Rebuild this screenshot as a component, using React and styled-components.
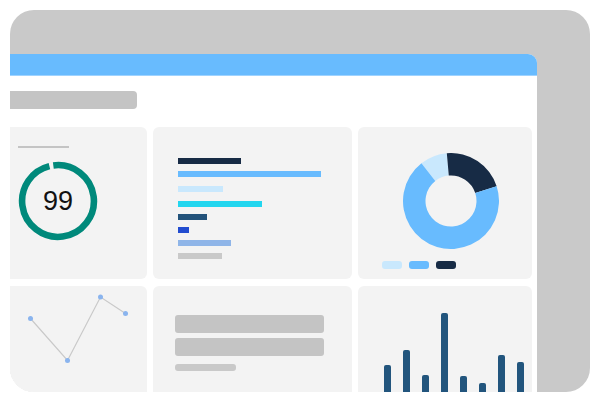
import React from "react";
import styled, { createGlobalStyle } from "styled-components";

const GlobalStyle = createGlobalStyle`
  html, body { margin: 0; padding: 0; background: #ffffff; }
  body { font-family: "Liberation Sans", Arial, sans-serif; }
  * { box-sizing: border-box; }
`;

const Stage = styled.div`
  width: 600px;
  height: 402px;
  padding: 10px;
`;

const Frame = styled.div`
  width: 580px;
  height: 382px;
  background: #c9c9c9;
  border-radius: 24px;
  overflow: hidden;
  display: flex;
  flex-direction: column;
  padding: 44px 53px 0 0;
`;

const Screen = styled.div`
  flex: 1;
  background: #ffffff;
  border-top-right-radius: 9px;
  overflow: hidden;
  display: flex;
  flex-direction: column;
`;

const TopBar = styled.div`
  flex-shrink: 0;
  height: 22px;
  background: #68bbfe;
  border-bottom: 1px solid #9fd3ff;
`;

const TitlePill = styled.div`
  flex-shrink: 0;
  margin: 15px 0 0 -10px;
  width: 137px;
  height: 18px;
  border-radius: 4px;
  background: #c4c4c4;
`;

const Grid = styled.div`
  flex-shrink: 0;
  margin: 18px 5px 0 -10px;
  display: grid;
  grid-template-columns: 147px 199px 174px;
  grid-template-rows: 152px 120px;
  column-gap: 6px;
  row-gap: 7px;
`;

const Card = styled.div`
  background: #f3f3f3;
  border-radius: 6px;
  display: flex;
  flex-direction: column;
  align-items: flex-start;
  padding: ${(p) => p.$pad || "0"};
  position: relative;
`;

const Rule = styled.div`
  width: 51px;
  height: 2px;
  background: #c4c4c4;
`;

const Gauge = styled.div`
  position: relative;
  width: 80px;
  height: 80px;
  margin-top: 13px;
  display: flex;
  align-items: center;
  justify-content: center;
`;

const GaugeSvg = styled.svg`
  position: absolute;
  inset: 0;
`;

const GaugeValue = styled.span`
  font-family: "Liberation Sans", Arial, sans-serif;
  font-size: 27px;
  color: #111111;
  line-height: 1;
  position: relative;
`;

const BarList = styled.div`
  display: flex;
  flex-direction: column;
`;

const HBar = styled.div`
  height: 6px;
  width: ${(p) => p.$w}px;
  background: ${(p) => p.$c};
  margin-top: ${(p) => p.$mt}px;
`;

const Donut = styled.svg`
  margin-left: 21px;
  display: block;
`;

const Legend = styled.div`
  display: flex;
  gap: 7px;
  margin-top: 12px;
`;

const LegendChip = styled.div`
  width: 20px;
  height: 8px;
  border-radius: 3px;
  background: ${(p) => p.$c};
`;

const Block = styled.div`
  width: ${(p) => p.$w}px;
  height: ${(p) => p.$h}px;
  border-radius: 3px;
  background: ${(p) => p.$c || "#c4c4c4"};
  margin-top: ${(p) => p.$mt}px;
`;

const Columns = styled.div`
  flex: 1;
  align-self: stretch;
  display: flex;
  align-items: flex-end;
  gap: 12px;
  padding-left: 26px;
`;

const VBar = styled.div`
  width: 7px;
  height: ${(p) => p.$h}px;
  background: #22557d;
  border-radius: 2px 2px 0 0;
`;

const hbars = [
  { w: 63, c: "#172b45", mt: 0 },
  { w: 143, c: "#68bbfe", mt: 7 },
  { w: 45, c: "#c9e8fd", mt: 9 },
  { w: 84, c: "#22d6ef", mt: 9 },
  { w: 29, c: "#22527a", mt: 7 },
  { w: 11, c: "#224ccf", mt: 7 },
  { w: 53, c: "#8fb5e8", mt: 7 },
  { w: 44, c: "#c9c9c9", mt: 7 },
];

const vbars = [41, 56, 31, 93, 30, 23, 51, 44];

function sector(cx, cy, r1, r2, a0, a1) {
  const rad = (a) => ((a - 90) * Math.PI) / 180;
  const p = (r, a) => [cx + r * Math.cos(rad(a)), cy + r * Math.sin(rad(a))];
  const large = a1 - a0 > 180 ? 1 : 0;
  const [x0, y0] = p(r2, a0);
  const [x1, y1] = p(r2, a1);
  const [x2, y2] = p(r1, a1);
  const [x3, y3] = p(r1, a0);
  return `M${x0} ${y0} A${r2} ${r2} 0 ${large} 1 ${x1} ${y1} L${x2} ${y2} A${r1} ${r1} 0 ${large} 0 ${x3} ${y3} Z`;
}

const points = [
  [30.5, 32.5],
  [67.5, 74.5],
  [100.5, 11],
  [125.5, 27.5],
];

export default function App() {
  const r = 35.9;
  const circ = 2 * Math.PI * r;
  return (
    <>
      <GlobalStyle />
      <Stage>
        <Frame>
          <Screen>
            <TopBar />
            <TitlePill />
            <Grid>
              <Card $pad="19px 0 0 18px">
                <Rule />
                <Gauge>
                  <GaugeSvg width="80" height="80" viewBox="0 0 80 80">
                    <circle
                      cx="40"
                      cy="40"
                      r={r}
                      fill="none"
                      stroke="#00897b"
                      strokeWidth="6.6"
                      strokeDasharray={`${circ * (353 / 360)} ${circ}`}
                      transform="rotate(-97.5 40 40)"
                    />
                  </GaugeSvg>
                  <GaugeValue>99</GaugeValue>
                </Gauge>
              </Card>
              <Card $pad="31px 0 0 25px">
                <BarList>
                  {hbars.map((b, i) => (
                    <HBar key={i} $w={b.w} $c={b.c} $mt={b.mt} />
                  ))}
                </BarList>
              </Card>
              <Card $pad="26px 0 0 24px">
                <Donut width="96" height="96" viewBox="0 0 96 96">
                  <path d={sector(48, 48, 25.5, 48, -38, -5)} fill="#c9e8fd" />
                  <path d={sector(48, 48, 25.5, 48, -5, 72)} fill="#172b45" />
                  <path d={sector(48, 48, 25.5, 48, 72, 322)} fill="#68bbfe" />
                </Donut>
                <Legend>
                  <LegendChip $c="#c9e8fd" />
                  <LegendChip $c="#68bbfe" />
                  <LegendChip $c="#172b45" />
                </Legend>
              </Card>
              <Card>
                <svg width="147" height="100" viewBox="0 0 147 100">
                  <polyline
                    points={points.map((p) => p.join(",")).join(" ")}
                    fill="none"
                    stroke="#c9c9c9"
                    strokeWidth="1.2"
                  />
                  {points.map((p, i) => (
                    <circle key={i} cx={p[0]} cy={p[1]} r="2.5" fill="#8ab4ee" />
                  ))}
                </svg>
              </Card>
              <Card $pad="29px 0 0 22px">
                <Block $w={149} $h={18} $mt={0} />
                <Block $w={149} $h={18} $mt={5} />
                <Block $w={61} $h={7} $mt={8} $c="#c9c9c9" />
              </Card>
              <Card>
                <Columns>
                  {vbars.map((h, i) => (
                    <VBar key={i} $h={h} />
                  ))}
                </Columns>
              </Card>
            </Grid>
          </Screen>
        </Frame>
      </Stage>
    </>
  );
}
